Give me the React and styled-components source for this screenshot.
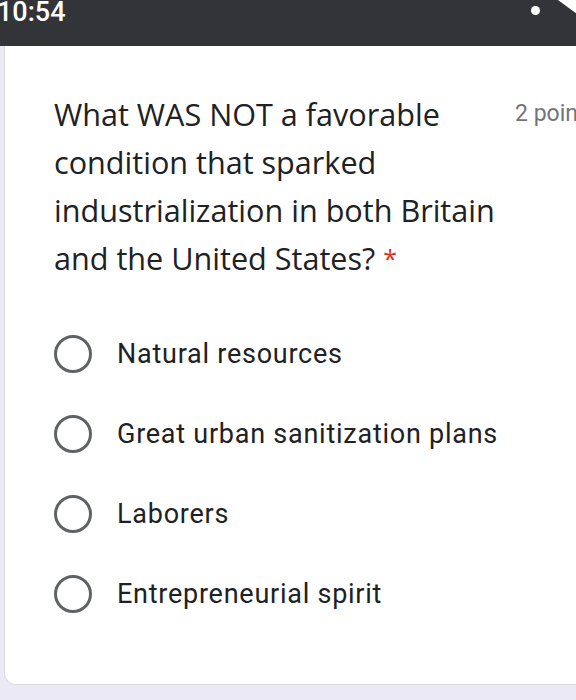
import React from "react";
import styled, { createGlobalStyle } from "styled-components";

const GlobalStyle = createGlobalStyle`
  html, body {
    margin: 0;
    padding: 0;
    background: #ece9f6;
    overflow: hidden;
  }
  body {
    width: 576px;
    height: 700px;
    font-family: Roboto, "Liberation Sans", sans-serif;
  }
`;

const StatusBar = styled.div`
  height: 46px;
  background: #333438;
  display: flex;
  align-items: flex-start;
  justify-content: space-between;
  color: #fff;
  overflow: hidden;
`;

const Clock = styled.span`
  font-size: 27px;
  font-weight: 500;
  line-height: 27px;
  margin: -1px 0 0 -3px;
`;

const StatusIcons = styled.div`
  display: flex;
  align-items: flex-start;
  gap: 18px;
  margin-right: -12px;
`;

const Dot = styled.span`
  width: 9px;
  height: 9px;
  border-radius: 50%;
  background: #fff;
  margin-top: 6px;
`;

const Card = styled.div`
  margin-left: 4px;
  width: 640px;
  background: #fff;
  border: 1px solid #dadce0;
  border-top: none;
  border-radius: 0 0 12px 12px;
  padding: 44px 0 50px 49px;
  box-sizing: border-box;
`;

const Header = styled.div`
  display: flex;
  align-items: flex-start;
`;

const Question = styled.div`
  width: 450px;
  font-family: "Open Sans", Roboto, sans-serif;
  font-size: 30.6px;
  line-height: 48px;
  color: #202124;
`;

const Required = styled.span`
  color: #d93025;
  font-size: 25px;
  margin-left: 8px;
  vertical-align: top;
`;

const Points = styled.div`
  margin-left: 11px;
  font-size: 23px;
  line-height: 48px;
  color: #70757a;
  white-space: nowrap;
`;

const Options = styled.div`
  margin-top: 32px;
  display: flex;
  flex-direction: column;
`;

const Option = styled.label`
  height: 80px;
  display: flex;
  align-items: center;
  gap: 25px;
`;

const Radio = styled.span`
  width: 38px;
  height: 38px;
  box-sizing: border-box;
  border: 3.5px solid #5f6368;
  border-radius: 50%;
  flex-shrink: 0;
`;

const OptionText = styled.span`
  font-size: 27px;
  color: #202124;
  letter-spacing: 0.75px;
`;

const options = [
  "Natural resources",
  "Great urban sanitization plans",
  "Laborers",
  "Entrepreneurial spirit",
];

export default function App() {
  return (
    <>
      <GlobalStyle />
      <StatusBar>
        <Clock>10:54</Clock>
        <StatusIcons>
          <Dot />
          <svg width="30" height="30" viewBox="0 0 30 30">
            <path d="M0 0 L30 0 L30 22 Z" fill="#fff" />
          </svg>
        </StatusIcons>
      </StatusBar>
      <Card>
        <Header>
          <Question>
            What WAS NOT a favorable condition that sparked industrialization in
            both Britain and the United States?<Required>*</Required>
          </Question>
          <Points>2 points</Points>
        </Header>
        <Options>
          {options.map((o) => (
            <Option key={o}>
              <Radio />
              <OptionText>{o}</OptionText>
            </Option>
          ))}
        </Options>
      </Card>
    </>
  );
}
